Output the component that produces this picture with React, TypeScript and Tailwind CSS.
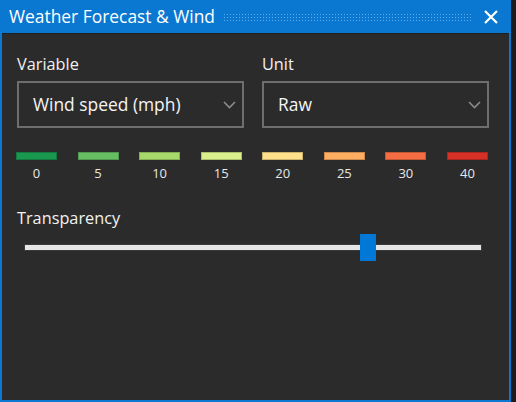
import React from 'react';

const legend = [
    { v: '0', c: '#1a9850' },
    { v: '5', c: '#66bd63' },
    { v: '10', c: '#a6d96a' },
    { v: '15', c: '#d9ef8b' },
    { v: '20', c: '#fee08b' },
    { v: '25', c: '#fdae61' },
    { v: '30', c: '#f46d43' },
    { v: '40', c: '#d73027' },
];

function Chevron() {
    return (
        <svg width="13" height="8" viewBox="0 0 13 8" fill="none">
            <path d="M1 1l5.5 5.5L12 1" stroke="#8a8a8a" strokeWidth="1.6" />
        </svg>
    );
}

function Select({ label, value }: { label: string; value: string }) {
    return (
        <div className="flex flex-col w-[228px]">
            <div className="text-[16.3px] leading-[22px] text-[#f2f2f2]">{label}</div>
            <div className="mt-[6px] h-[47px] border-2 border-[#6e6e6e] flex items-center justify-between pl-[14px] pr-[6px]">
                <span className="text-[17.4px] text-[#f5f5f5]">{value}</span>
                <Chevron />
            </div>
        </div>
    );
}

export default function App() {
    const thumbPos = 73.3; // percent
    return (
        <div className="w-[516px] h-[402px] bg-[#1c1c1c] font-['Open_Sans',sans-serif]">
            <div className="w-[511px] h-[402px] bg-[#0a78d1] flex flex-col px-[2px] pb-[2px]">
                {/* title bar */}
                <div className="h-[33px] flex items-center pl-[7px] pr-[11px] shrink-0">
                    <span className="text-[17.4px] text-white whitespace-nowrap">Weather Forecast &amp; Wind</span>
                    <div className="flex-1 h-[8px] ml-[8px] mr-[12px] bg-[radial-gradient(#62ade9_0.8px,transparent_0.9px)] bg-[length:3px_3px]" />
                    <svg width="16" height="14" viewBox="0 0 16 14" className="mr-[-1px]">
                        <path d="M2 1l12 12M14 1L2 13" stroke="white" strokeWidth="2.2" />
                    </svg>
                </div>

                {/* body */}
                <div className="flex-1 bg-[#2b2b2b] border-t border-[#1f1f1f] pt-[19px] pl-[15px] pr-[20px]">
                    <div className="flex gap-[18px]">
                        <Select label="Variable" value="Wind speed (mph)" />
                        <Select label="Unit" value="Raw" />
                    </div>

                    <div className="mt-[24px] -ml-[1px] flex justify-between w-[472px]">
                        {legend.map(l => (
                            <div key={l.v} className="flex flex-col items-center w-[41px]">
                                <div className="w-[41px] h-[8px] border border-black/20" style={{ backgroundColor: l.c }} />
                                <span className="mt-[5px] text-[13px] leading-[16px] text-[#e8e8e8]">{l.v}</span>
                            </div>
                        ))}
                    </div>

                    <div className="mt-[26px] text-[16.3px] leading-[22px] text-[#f2f2f2]">Transparency</div>

                    <div className="mt-[5px] ml-[7px] w-[458px] h-[27px] relative flex items-center">
                        <div className="w-full h-[7px] bg-[#e6e6e6] border border-[#3a3a3a]" />
                        <div className="absolute top-0 w-[16px] h-[27px] bg-[#0078d7]" style={{ left: `${thumbPos}%` }} />
                    </div>
                </div>
            </div>
        </div>
    );
}
